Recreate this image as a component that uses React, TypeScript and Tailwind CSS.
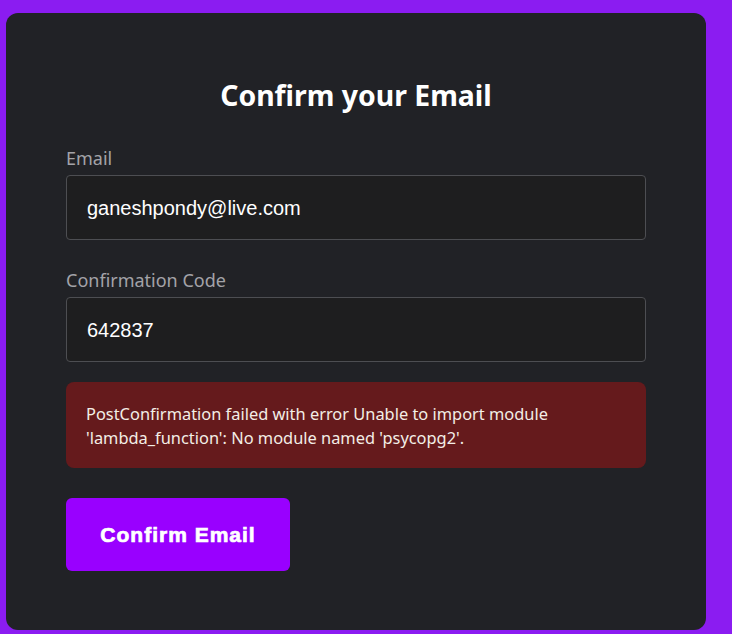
const PURPLE = "#8b1cf1";

export default function App() {
  return (
    <div className="min-h-[634px] w-full pl-[6px] pt-[13px] pb-[4px]" style={{ background: PURPLE }}>
      <div className="w-[700px] h-[617px] rounded-xl bg-[#212226] px-[60px] pt-[64px] [font-family:'Noto_Sans',sans-serif]">
        {/* Heading */}
        <h1 className="text-center text-[28.4px] leading-[36px] font-bold text-white">
          Confirm your Email
        </h1>

        <div className="mt-[33px]">
          <label className="block text-[18px] leading-[24px] text-[#a3a3a8] mb-[5px]">Email</label>
          <div className="h-[65px] flex items-center rounded border border-[#4d4e52] bg-[#1e1e1f] px-[20px] text-[20px] text-white [font-family:'Liberation_Sans',Arial,sans-serif]">
            ganeshpondy@live.com
          </div>
        </div>

        <div className="mt-[28px]">
          <label className="block text-[18px] leading-[24px] text-[#a3a3a8] mb-[5px]">Confirmation Code</label>
          <div className="h-[65px] flex items-center rounded border border-[#4d4e52] bg-[#1e1e1f] px-[20px] text-[20px] text-white [font-family:'Liberation_Sans',Arial,sans-serif]">
            642837
          </div>
        </div>

        {/* error */}
        <div className="mt-[20px] h-[86px] rounded-lg bg-[#651a1c] px-[20px] pt-[20px] text-[16.4px] leading-[24px] text-[#f3eee6]">
          PostConfirmation failed with error Unable to import module
          <br />
          'lambda_function': No module named 'psycopg2'.
        </div>

        <button className="mt-[30px] h-[73px] w-[224px] rounded-md bg-[#9900ff] text-[21px] font-bold tracking-[1px] text-white [-webkit-text-stroke:0.7px_white] [font-family:'Liberation_Sans',Arial,sans-serif]">
          Confirm Email
        </button>
      </div>
    </div>
  );
}
